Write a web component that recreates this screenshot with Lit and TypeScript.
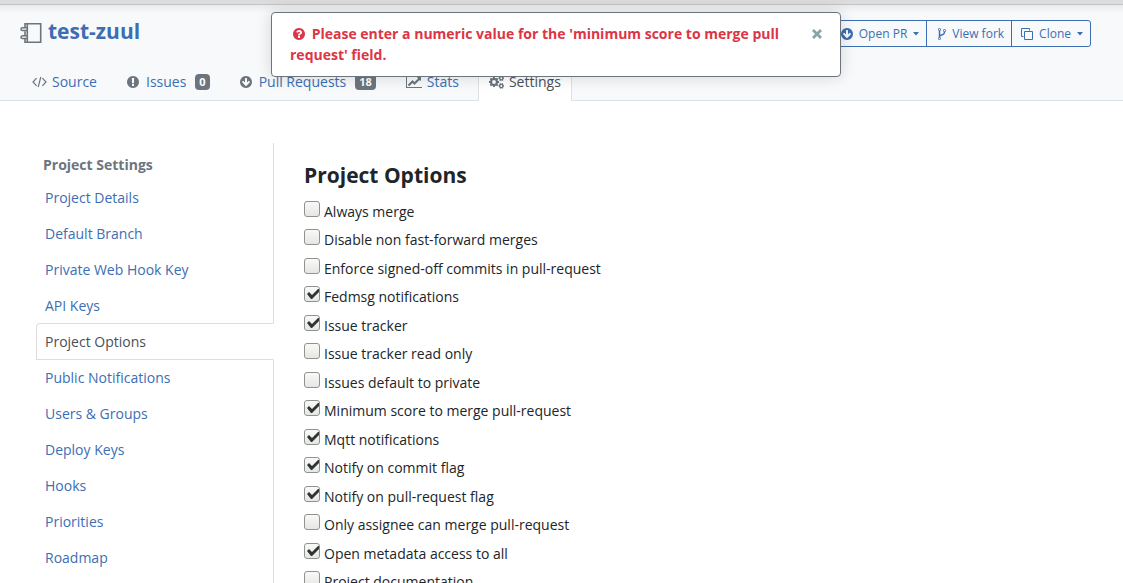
import { LitElement, html, svg, css, nothing } from "lit";
import { customElement, property, state } from "lit/decorators.js";

const gear = (cx: number, cy: number, r: number, teeth: number, hole: number) => {
  const pts: string[] = [];
  const step = (Math.PI * 2) / teeth;
  for (let i = 0; i < teeth; i++) {
    const a = i * step;
    for (const [off, k] of [[-0.34, 0.78], [-0.22, 1], [0.22, 1], [0.34, 0.78]]) {
      pts.push(`${(cx + Math.cos(a + off * step) * r * k).toFixed(2)} ${(cy + Math.sin(a + off * step) * r * k).toFixed(2)}`);
    }
  }
  return `M${pts.join("L")}ZM${cx - hole} ${cy}a${hole} ${hole} 0 1 0 ${hole * 2} 0a${hole} ${hole} 0 1 0 ${-hole * 2} 0Z`;
};

const ICONS: Record<string, { box: string; w: number; h: number; body: unknown }> = {
  code: {
    box: "0 0 15 14", w: 15, h: 14,
    body: svg`<path fill="none" stroke="currentColor" stroke-width="1.2" d="M4.6 3.2 1 7l3.6 3.8M10.4 3.2 14 7l-3.6 3.8M8.8 2 6.2 12.2"/>`,
  },
  exclamation: {
    box: "128 0 1536 1792", w: 12, h: 14,
    body: svg`<path d="M896 128q209 0 385.5 103t279.5 279.5 103 385.5-103 385.5-279.5 279.5-385.5 103-385.5-103-279.5-279.5-103-385.5 103-385.5 279.5-279.5 385.5-103zm128 1247v-190q0-14-9-23.5t-22-9.5h-192q-13 0-23 10t-10 23v190q0 13 10 23t23 10h192q13 0 22-9.5t9-23.5zm-2-344l18-621q0-12-10-18-10-8-24-8h-220q-14 0-24 8-10 6-10 18l17 621q0 10 10 17.5t24 7.5h185q14 0 23.5-7.5t10.5-17.5z"/>`,
  },
  arrowDown: {
    box: "128 0 1536 1792", w: 12, h: 14,
    body: svg`<path d="M1412 897q0-27-18-45l-91-91q-18-18-45-18t-45 18l-189 189v-502q0-26-19-45t-45-19h-128q-26 0-45 19t-19 45v502l-189-189q-19-19-45-19t-45 19l-91 91q-18 18-18 45t18 45l362 362 91 91q18 18 45 18t45-18l91-91 362-362q18-18 18-45zm252-1q0 209-103 385.5t-279.5 279.5-385.5 103-385.5-103-279.5-279.5-103-385.5 103-385.5 279.5-279.5 385.5-103 385.5 103 279.5 279.5 103 385.5z"/>`,
  },
  question: {
    box: "128 0 1536 1792", w: 12, h: 14,
    body: svg`<path d="M1024 1376v-192q0-14-9-23t-23-9h-192q-14 0-23 9t-9 23v192q0 14 9 23t23 9h192q14 0 23-9t9-23zm256-672q0-88-55.5-163t-138.5-116-170-41q-243 0-371 213-15 24 8 42l132 100q7 6 19 6 16 0 25-12 53-68 86-92 34-24 86-24 48 0 85.5 26t37.5 59q0 38-20 61t-68 45q-63 28-115.5 86.5t-52.5 125.5v36q0 14 9 23t23 9h192q14 0 23-9t9-23q0-19 21.5-49.5t54.5-49.5q32-18 49-28.5t46-35 44.5-48 28-60.5 12.5-81zm384 192q0 209-103 385.5t-279.5 279.5-385.5 103-385.5-103-279.5-279.5-103-385.5 103-385.5 279.5-279.5 385.5-103 385.5 103 279.5 279.5 103 385.5z"/>`,
  },
  chart: {
    box: "0 0 2048 1792", w: 16, h: 14,
    body: svg`<path d="M2048 1536v128h-2048v-1536h128v1408h1920zm-128-1248v435q0 21-19.5 29.5t-35.5-7.5l-121-121-633 633q-10 10-23 10t-23-10l-233-233-416 416-192-192 585-585q10-10 23-10t23 10l233 233 464-464-121-121q-16-16-7.5-35.5t29.5-19.5h435q14 0 23 9t9 23z"/>`,
  },
  cogs: {
    box: "0 0 15 14", w: 15, h: 14,
    body: svg`<path fill-rule="evenodd" d="${gear(5, 7, 5.2, 8, 1.9)}${gear(12.3, 3.2, 2.9, 6, 1)}${gear(12.3, 10.9, 2.9, 6, 1)}"/>`,
  },
  fork: {
    box: "128 0 1280 1792", w: 10, h: 14,
    body: svg`<path d="M672 1472q0-40-28-68t-68-28-68 28-28 68 28 68 68 28 68-28 28-68zm0-1152q0-40-28-68t-68-28-68 28-28 68 28 68 68 28 68-28 28-68zm640 128q0-40-28-68t-68-28-68 28-28 68 28 68 68 28 68-28 28-68zm96 0q0 52-26 96.5t-70 69.5q-2 287-226 414-67 38-203 81-128 40-169.5 71t-41.5 100v26q44 25 70 69.5t26 96.5q0 80-56 136t-136 56-136-56-56-136q0-52 26-96.5t70-69.5v-820q-44-25-70-69.5t-26-96.5q0-80 56-136t136-56 136 56 56 136q0 52-26 96.5t-70 69.5v497q54-26 154-57 55-17 87.5-29.5t70.5-31 59-39.5 40.5-51 28-69.5 8.5-91.5q-44-25-70-69.5t-26-96.5q0-80 56-136t136-56 136 56 56 136z"/>`,
  },
  clone: {
    box: "0 0 12 14", w: 12, h: 14,
    body: svg`<path fill="none" stroke="currentColor" d="M3.5 4.5h8v8h-8zM2.5 9.5h-2v-8h8v2"/>`,
  },
  caret: {
    box: "0 0 6 4", w: 6, h: 4,
    body: svg`<path d="M0 0h6L3 3.5z"/>`,
  },
  close: {
    box: "0 0 10 10", w: 10, h: 10,
    body: svg`<path fill="none" stroke="currentColor" stroke-width="2.8" d="m1 1 8 8M9 1 1 9"/>`,
  },
  book: {
    box: "0 0 22 20", w: 22, h: 20,
    body: svg`<path fill="none" stroke="currentColor" stroke-width="1.6" d="M5 5V.8h15.700v18.400H5V16M5 8.200V12.500M7.300 1v18"/><path fill="none" stroke="currentColor" stroke-width="1.5" d="M7 4.800H2.500a1.500 1.400 0 0 0 0 2.800H7M7 12.800H2.500a1.500 1.400 0 0 0 0 2.800H7"/>`,
  },
};

@customElement("ui-icon")
class UiIcon extends LitElement {
  @property() name = "";
  static styles = css`
    :host { display: inline-flex; flex: none; }
    svg { display: block; fill: currentColor; }
  `;
  render() {
    const i = ICONS[this.name];
    return i ? html`<svg aria-hidden="true" viewBox=${i.box} width=${i.w} height=${i.h}>${i.body}</svg>` : nothing;
  }
}

const TABS = [
  { label: "Source", icon: "code" },
  { label: "Issues", icon: "exclamation", count: 0 },
  { label: "Pull Requests", icon: "arrowDown", count: 18 },
  { label: "Stats", icon: "chart" },
  { label: "Settings", icon: "cogs", active: true },
];

const SECTIONS = [
  "Project Details", "Default Branch", "Private Web Hook Key", "API Keys", "Project Options",
  "Public Notifications", "Users & Groups", "Deploy Keys", "Hooks", "Priorities", "Roadmap",
];

const OPTIONS: [string, boolean][] = [
  ["Always merge", false],
  ["Disable non fast-forward merges", false],
  ["Enforce signed-off commits in pull-request", false],
  ["Fedmsg notifications", true],
  ["Issue tracker", true],
  ["Issue tracker read only", false],
  ["Issues default to private", false],
  ["Minimum score to merge pull-request", true],
  ["Mqtt notifications", true],
  ["Notify on commit flag", true],
  ["Notify on pull-request flag", true],
  ["Only assignee can merge pull-request", false],
  ["Open metadata access to all", true],
  ["Project documentation", false],
];

@customElement("app-root")
class AppRoot extends LitElement {
  @state() private alertOpen = true;

  static styles = css`
    :host {
      display: block;
      height: 100vh;
      overflow: hidden;
      background: #fff;
      color: #212529;
      font: 14px/21px "Open Sans", "Noto Sans", sans-serif;
    }
    * { box-sizing: border-box; }
    a { color: #3c6eb4; text-decoration: none; }
    h1, h2, h3, ul { margin: 0; padding: 0; }
    ul { list-style: none; }
    button { font: inherit; cursor: pointer; }

    .strip {
      height: 5px;
      background: #dcdcdc;
      border-bottom: 1px solid #c4c4c4;
    }
    .header {
      display: flex;
      flex-direction: column;
      height: 96px;
      background: linear-gradient(#e9eaeb, #f8f9fa 8px);
      border-bottom: 1px solid #dee2e6;
    }
    .top {
      display: flex;
      justify-content: space-between;
      align-items: flex-start;
      padding: 12px 32px 0 20px;
    }
    .title {
      display: flex;
      align-items: center;
      gap: 6px;
      font-size: 21px;
      line-height: 28px;
      font-weight: 700;
    }
    .title ui-icon { color: #6c757d; padding-top: 3px; }

    .actions { display: flex; padding-top: 3px; }
    .btn {
      display: flex;
      align-items: center;
      gap: 6px;
      height: 27px;
      margin-left: -1px;
      padding: 0 7px 0 9px;
      border: 1px solid #3c6eb4;
      background: transparent;
      color: #3c6eb4;
      font-size: 12px;
      line-height: 18px;
    }
    .btn:first-child { border-radius: 3px 0 0 3px; }
    .btn:last-child { border-radius: 0 3px 3px 0; }

    .tabs {
      display: flex;
      gap: 8px;
      margin: auto 0 -1px;
      padding: 0 21px;
    }
    .tab {
      display: flex;
      align-items: center;
      gap: 5px;
      height: 40px;
      padding: 0 10px;
      border: 1px solid transparent;
      border-bottom: 0;
      border-radius: 4px 4px 0 0;
    }
    .tab ui-icon { min-width: 14px; color: #6c757d; }
    .tab.active { background: #fff; border-color: #dee2e6; color: #495057; }
    .badge {
      margin-left: 4px;
      padding: 0 4px;
      border-radius: 4px;
      background: #6c757d;
      color: #fff;
      font-size: 11px;
      line-height: 16px;
      font-weight: 700;
    }

    .body { display: flex; align-items: flex-start; padding: 42px 32px 0 36px; }
    .side {
      flex: none;
      width: 238px;
      padding-bottom: 60px;
      border-right: 1px solid #dddddd;
    }
    .side h3 {
      padding: 11px 7px 4px;
      font-size: 14px;
      line-height: 21px;
      color: #6c757d;
    }
    .side a {
      display: block;
      height: 36px;
      margin-right: -1px;
      padding: 7px 8px 0;
      border: 1px solid transparent;
    }
    .side a.active {
      background: #fff;
      border-color: #dddddd;
      border-right-color: #fff;
      border-radius: 4px 0 0 0;
      height: 37px;
      margin-bottom: -1px;
      color: #495057;
    }
    .main { flex: 1; min-width: 0; padding: 18px 0 0 30px; }
    .main h2 { font-size: 21px; line-height: 28px; font-weight: 700; }
    .options { display: grid; grid-auto-rows: 28px 29px; padding-top: 9px; }
    .option { display: flex; align-items: flex-start; gap: 4px; }
    .option label { padding-top: 3px; }
    .option input {
      appearance: none;
      flex: none;
      width: 16px;
      height: 16px;
      margin: 3px 0 0;
      border: 1px solid #92938f;
      border-radius: 3px;
      background: linear-gradient(#f9f9f8, #e6e6e4);
    }
    .option input:checked::before {
      content: "";
      display: block;
      width: 14px;
      height: 14px;
      background: #2e3436;
      clip-path: polygon(2px 7px, 4px 5px, 7px 8px, 13px 2px, 14px 2px, 14px 5px, 7px 12px, 6px 12px);
    }

    .alert {
      position: absolute;
      top: 12px;
      left: 271px;
      width: 570px;
      display: flex;
      align-items: flex-start;
      justify-content: space-between;
      padding: 10px 18px 11px;
      border: 1px solid #6c757d;
      border-radius: 4px;
      background: #fff;
      box-shadow: 0 0 16px rgba(0, 0, 0, 0.15);
      color: #dc3545;
      font-weight: 700;
    }
    .alert p { margin: 0; width: 500px; }
    .alert p ui-icon { vertical-align: -2px; margin: 0 3px; }
    .close {
      display: flex;
      padding: 6px 0 0;
      border: 0;
      background: none;
      color: #86a5aa;
    }
  `;

  render() {
    return html`
      <div class="strip"></div>
      <header class="header">
        <div class="top">
          <h1 class="title"><ui-icon name="book"></ui-icon><a href="#project">test-zuul</a></h1>
          <div class="actions">
            <button class="btn"><ui-icon name="arrowDown"></ui-icon>Open PR<ui-icon name="caret"></ui-icon></button>
            <button class="btn"><ui-icon name="fork"></ui-icon>View fork</button>
            <button class="btn"><ui-icon name="clone"></ui-icon>Clone<ui-icon name="caret"></ui-icon></button>
          </div>
        </div>
        <nav class="tabs">
          ${TABS.map((t) => html`<a class="tab ${t.active ? "active" : ""}" href="#tab">
            <ui-icon name=${t.icon}></ui-icon><span>${t.label}</span>
            ${t.count !== undefined ? html`<span class="badge">${t.count}</span>` : nothing}
          </a>`)}
        </nav>
      </header>
      <div class="body">
        <nav class="side">
          <h3>Project Settings</h3>
          ${SECTIONS.map((s) => html`<a class=${s === "Project Options" ? "active" : ""} href="#section">${s}</a>`)}
        </nav>
        <main class="main">
          <h2>Project Options</h2>
          <ul class="options">
            ${OPTIONS.map(([label, on], i) => html`<li class="option">
              <input type="checkbox" id="opt-${i}" .checked=${on} /><label for="opt-${i}">${label}</label>
            </li>`)}
          </ul>
        </main>
      </div>
      ${this.alertOpen ? html`<div class="alert" role="alert">
        <p><ui-icon name="question"></ui-icon> Please enter a numeric value for the 'minimum score to merge pull request' field.</p>
        <button class="close" aria-label="Close" @click=${() => (this.alertOpen = false)}><ui-icon name="close"></ui-icon></button>
      </div>` : nothing}
    `;
  }
}
